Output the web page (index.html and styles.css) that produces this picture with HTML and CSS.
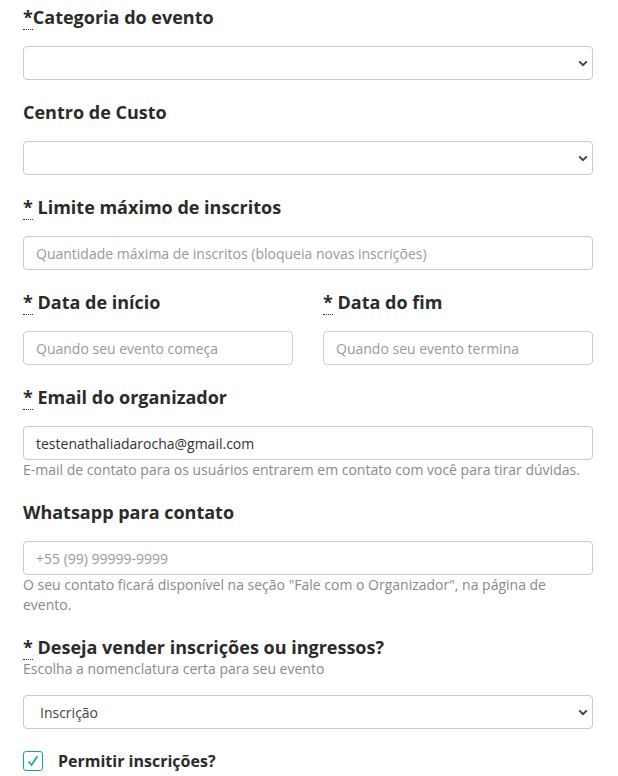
FILE: index.html
```html
<!DOCTYPE html>
<html lang="pt-BR">
<head>
<meta charset="utf-8">
<title>Evento</title>
<link rel="stylesheet" href="styles.css">
</head>
<body>
<form class="form">
  <div class="group">
    <label class="label"><abbr class="req" title="obrigatório">*</abbr>Categoria do evento</label>
    <div class="select-wrap">
      <select class="control select"><option></option></select>
      <svg class="chev" width="10" height="7" viewBox="0 0 10 7"><path d="M1.2 1.4 L5 5.2 L8.8 1.4" fill="none" stroke="#444" stroke-width="2"/></svg>
    </div>
  </div>

  <div class="group">
    <label class="label">Centro de Custo</label>
    <div class="select-wrap">
      <select class="control select"><option></option></select>
      <svg class="chev" width="10" height="7" viewBox="0 0 10 7"><path d="M1.2 1.4 L5 5.2 L8.8 1.4" fill="none" stroke="#444" stroke-width="2"/></svg>
    </div>
  </div>

  <div class="group">
    <label class="label"><abbr class="req" title="obrigatório">*</abbr> Limite máximo de inscritos</label>
    <input class="control" type="text" placeholder="Quantidade máxima de inscritos (bloqueia novas inscrições)">
  </div>

  <div class="row">
    <div class="group">
      <label class="label"><abbr class="req" title="obrigatório">*</abbr> Data de início</label>
      <input class="control" type="text" placeholder="Quando seu evento começa">
    </div>
    <div class="group">
      <label class="label"><abbr class="req" title="obrigatório">*</abbr> Data do fim</label>
      <input class="control" type="text" placeholder="Quando seu evento termina">
    </div>
  </div>

  <div class="group">
    <label class="label"><abbr class="req" title="obrigatório">*</abbr> Email do organizador</label>
    <input class="control" type="text" value="testenathaliadarocha@gmail.com">
    <p class="help">E-mail de contato para os usuários entrarem em contato com você para tirar dúvidas.</p>
  </div>

  <div class="group">
    <label class="label">Whatsapp para contato</label>
    <input class="control" type="text" placeholder="+55 (99) 99999-9999">
    <p class="help">O seu contato ficará disponível na seção "Fale com o Organizador", na página de evento.</p>
  </div>

  <div class="group">
    <label class="label label-tight"><abbr class="req" title="obrigatório">*</abbr> Deseja vender inscrições ou ingressos?</label>
    <p class="help help-sub">Escolha a nomenclatura certa para seu evento</p>
    <div class="select-wrap">
      <select class="control select select-val"><option>Inscrição</option></select>
      <svg class="chev" width="10" height="7" viewBox="0 0 10 7"><path d="M1.2 1.4 L5 5.2 L8.8 1.4" fill="none" stroke="#444" stroke-width="2"/></svg>
    </div>
  </div>

  <div class="check-row">
    <span class="checkbox">
      <svg width="14" height="14" viewBox="0 0 14 14"><path d="M2.5 7.5 L5.6 11 L11.5 2.2" fill="none" stroke="#1aa3a3" stroke-width="1.6"/></svg>
    </span>
    <span class="check-label">Permitir inscrições?</span>
  </div>
</form>
</body>
</html>
```

FILE: styles.css
```css
* { box-sizing: border-box; }

html, body {
  margin: 0;
  padding: 0;
  background: #fff;
}

body {
  font-family: "Open Sans", "Noto Sans", sans-serif;
  color: #2b2b2b;
}

.form {
  width: 570px;
  margin-left: 23px;
  padding-top: 5px;
}

.group {
  margin-bottom: 20px;
}

.row {
  display: grid;
  grid-template-columns: 270px 270px;
  column-gap: 30px;
}

.label {
  display: block;
  font-size: 18px;
  font-weight: 700;
  line-height: 24px;
  margin-bottom: 17px;
  color: #2b2b2b;
}

.label-tight {
  margin-bottom: 0;
}

.req {
  text-decoration: none;
  border-bottom: 1px dotted #333;
  cursor: help;
}

.control {
  display: block;
  width: 100%;
  height: 34px;
  margin: 0;
  padding: 0 12px;
  border: 1px solid #ccc;
  border-radius: 4px;
  background: #fff;
  font-family: "Open Sans", "Noto Sans", sans-serif;
  font-size: 14px;
  color: #333;
  outline: none;
}

.control::placeholder {
  color: #999;
}

.select-wrap {
  position: relative;
}

.select {
  appearance: none;
  -webkit-appearance: none;
  padding: 0 30px 0 16px;
}

.select-val {
  color: #444;
}

.chev {
  position: absolute;
  right: 5px;
  top: 14px;
  pointer-events: none;
}

.help {
  margin: 0;
  font-size: 14px;
  line-height: 20px;
  color: #8a8a8a;
}

.help-sub {
  margin-bottom: 16px;
}

.check-row {
  display: flex;
  align-items: center;
  margin-top: 22px;
}

.checkbox {
  width: 20px;
  height: 20px;
  border: 1px solid #1aa3a3;
  border-radius: 3px;
  display: flex;
  align-items: center;
  justify-content: center;
  flex: none;
}

.check-label {
  margin-left: 15px;
  font-size: 16px;
  font-weight: 700;
  color: #2b2b2b;
  line-height: 20px;
}
```
